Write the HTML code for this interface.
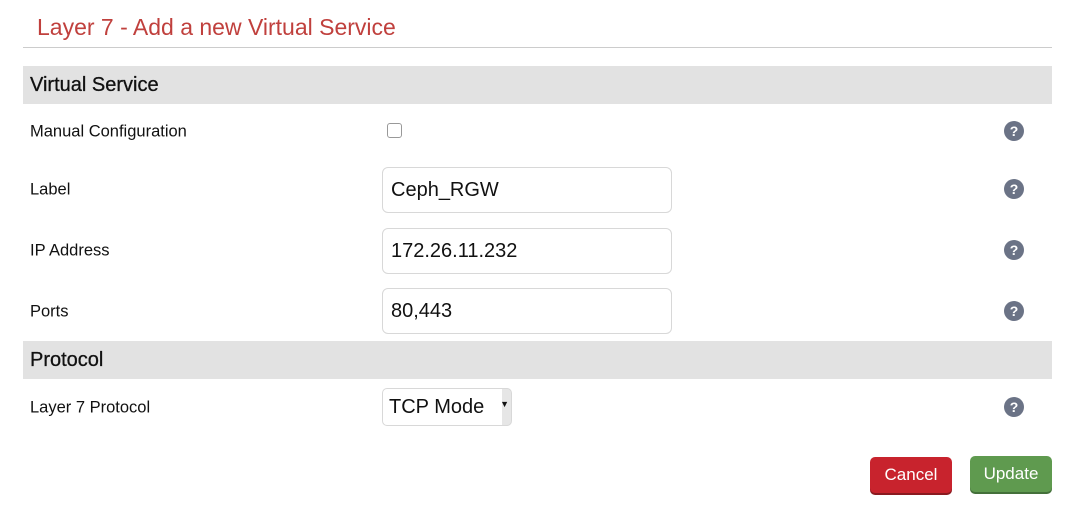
<!DOCTYPE html>
<html><head><style>
*{margin:0;padding:0;box-sizing:border-box}
body{width:1070px;height:509px;background:#fff;font-family:"Liberation Sans",sans-serif;color:#111;position:relative;overflow:hidden}
.a{position:absolute}
.title{left:37px;top:14px;font-size:23px;color:#c0403d;white-space:nowrap}
.hr{left:23px;top:47px;width:1029px;height:1px;background:#ccc}
.bar{left:23px;width:1029px;background:#e2e2e2;font-size:20px;padding-left:7px;display:flex;align-items:center;color:#111;-webkit-text-stroke:0.3px #111}
.lbl{left:30px;font-size:16.5px;transform:translateY(-45%);white-space:nowrap}
.inp{left:382px;width:290px;height:46px;border:1px solid #d8d8d8;border-radius:6px;font-size:20px;padding-left:8px;display:flex;align-items:center}
.help{left:1004px;width:20px;height:20px;border-radius:50%;background:#6b7386;color:#fff;font-weight:bold;font-size:14px;text-align:center;line-height:20px}
.cb{left:387px;top:123px;width:15px;height:15px;border:1px solid #999;border-radius:3px}
.btn{width:82px;height:36px;border-radius:5px;color:#fff;font-size:17px;display:flex;align-items:center;justify-content:center}
</style></head><body>
<div class="a title">Layer 7 - Add a new Virtual Service</div>
<div class="a hr"></div>
<div class="a bar" style="top:66px;height:38px">Virtual Service</div>
<div class="a lbl" style="top:131px">Manual Configuration</div>
<div class="a cb"></div>
<div class="a help" style="top:121px">?</div>
<div class="a lbl" style="top:189px">Label</div>
<div class="a inp" style="top:167px">Ceph_RGW</div>
<div class="a help" style="top:179px">?</div>
<div class="a lbl" style="top:250px">IP Address</div>
<div class="a inp" style="top:228px">172.26.11.232</div>
<div class="a help" style="top:240px">?</div>
<div class="a lbl" style="top:311px">Ports</div>
<div class="a inp" style="top:288px">80,443</div>
<div class="a help" style="top:301px">?</div>
<div class="a bar" style="top:341px;height:38px">Protocol</div>
<div class="a lbl" style="top:407px">Layer 7 Protocol</div>
<div class="a" style="left:382px;top:388px;width:130px;height:38px;border:1px solid #d8d8d8;border-radius:5px;font-size:20px;padding-left:6px;display:flex;align-items:center;background:linear-gradient(to right,#fff 119px,#e6e6e6 119px)">TCP Mode<span style="position:absolute;right:2px;top:10px;font-size:9px">▼</span></div>
<div class="a help" style="top:397px">?</div>
<div class="a btn" style="left:870px;top:457px;background:#c8232d;box-shadow:0 2px 0 #8a1a20">Cancel</div>
<div class="a btn" style="left:970px;top:456px;background:#5f9a4f;box-shadow:0 2px 0 #44703a">Update</div>
</body></html>
